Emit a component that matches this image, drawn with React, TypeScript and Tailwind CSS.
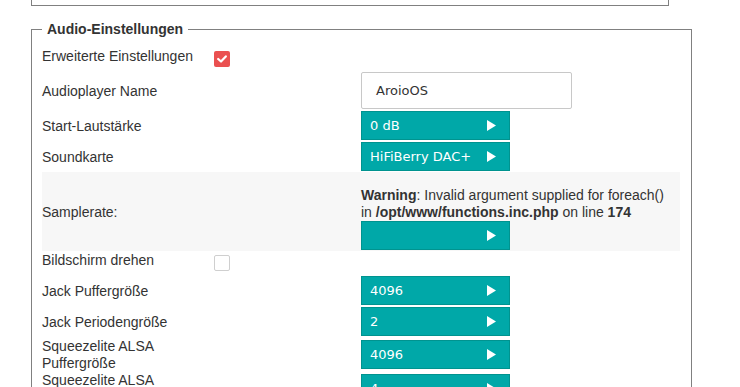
import React from "react";

const Tri = () => (
  <svg width="9" height="11" viewBox="0 0 9 11" className="shrink-0">
    <polygon points="0,0 9,5.5 0,11" fill="#ffffff" />
  </svg>
);

const Btn = ({ v }: { v: string }) => (
  <div className="flex h-[29px] w-[149px] items-center justify-between border border-[#00938f] bg-[#00a8a8] pl-[8px] pr-[13px] font-['DejaVu_Sans',sans-serif] text-[13px] text-white">
    <span>{v}</span>
    <Tri />
  </div>
);

const Check = ({ on }: { on?: boolean }) =>
  on ? (
    <div className="flex h-[16px] w-[16px] items-center justify-center rounded-[2px] bg-[#ea5050]">
      <svg width="10" height="8" viewBox="0 0 10 8">
        <polyline points="1.2,4 4,6.5 8.8,1.4" fill="none" stroke="#fff" strokeWidth="2.2" strokeLinecap="round" strokeLinejoin="round" />
      </svg>
    </div>
  ) : (
    <div className="h-[16px] w-[16px] rounded-[2px] border border-[#cfcfcf] bg-white" />
  );

const row = "grid grid-cols-[172px_147px_1fr]";

const SelectRow = ({ label, v, two }: { label: string; v: string; two?: boolean }) => (
  <div className={`${row} items-center ${two ? "h-[34px]" : "h-[31px]"}`}>
    <div className={`leading-[17px] ${two ? "pt-[1px]" : "pt-[2px]"}`}>{label}</div>
    <div />
    <div>
      <Btn v={v} />
    </div>
  </div>
);

const CheckRow = ({ label, on }: { label: string; on?: boolean }) => (
  <div className={`${row} h-[24px] items-start`}>
    <div className="pt-[1px] leading-[17px]">{label}</div>
    <div className="pt-[4px]">
      <Check on={on} />
    </div>
    <div />
  </div>
);

export default function App() {
  return (
    <div className="min-h-screen bg-white font-['Liberation_Sans',Arial,sans-serif] text-[14px] text-[#333333]">
      <div className="ml-[31px] h-[6px] w-[638px] border-x border-b border-[#808080]" />
      <fieldset className="ml-[31px] mt-[15px] w-[661px] border border-[#808080] pb-[20px] pl-[10px] pr-[11px] pt-[9px]">
        <legend className="ml-0 px-[5px] font-bold leading-[17px] text-[#333333]">Audio-Einstellungen</legend>
        <CheckRow label="Erweiterte Einstellungen" on />
        <div className={`${row} h-[39px] items-center`}>
          <div className="pt-[2px] leading-[17px]">Audioplayer Name</div>
          <div />
          <div>
            <div className="flex h-[37px] w-[211px] items-center rounded-[2px] border border-[#c8c8c8] bg-white pl-[14px] font-['DejaVu_Sans',sans-serif] text-[13px] text-[#333333]">
              AroioOS
            </div>
          </div>
        </div>
        <SelectRow label="Start-Lautstärke" v="0 dB" />
        <SelectRow label="Soundkarte" v="HiFiBerry DAC+" />
        <div className={`${row} bg-[#f7f7f7]`}>
          <div className="self-center pt-[2px] leading-[17px]">Samplerate:</div>
          <div />
          <div className="pb-[1px] pt-[15px]">
            <div className="pr-[6px] leading-[17px]">
              <b>Warning</b>: Invalid argument supplied for foreach() in <b>/opt/www/functions.inc.php</b> on line <b>174</b>
            </div>
            <Btn v="" />
          </div>
        </div>
        <CheckRow label="Bildschirm drehen" />
        <SelectRow label="Jack Puffergröße" v="4096" />
        <SelectRow label="Jack Periodengröße" v="2" />
        <SelectRow label="Squeezelite ALSA Puffergröße" v="4096" two />
        <SelectRow label="Squeezelite ALSA Periodengröße" v="4" two />
      </fieldset>
    </div>
  );
}
